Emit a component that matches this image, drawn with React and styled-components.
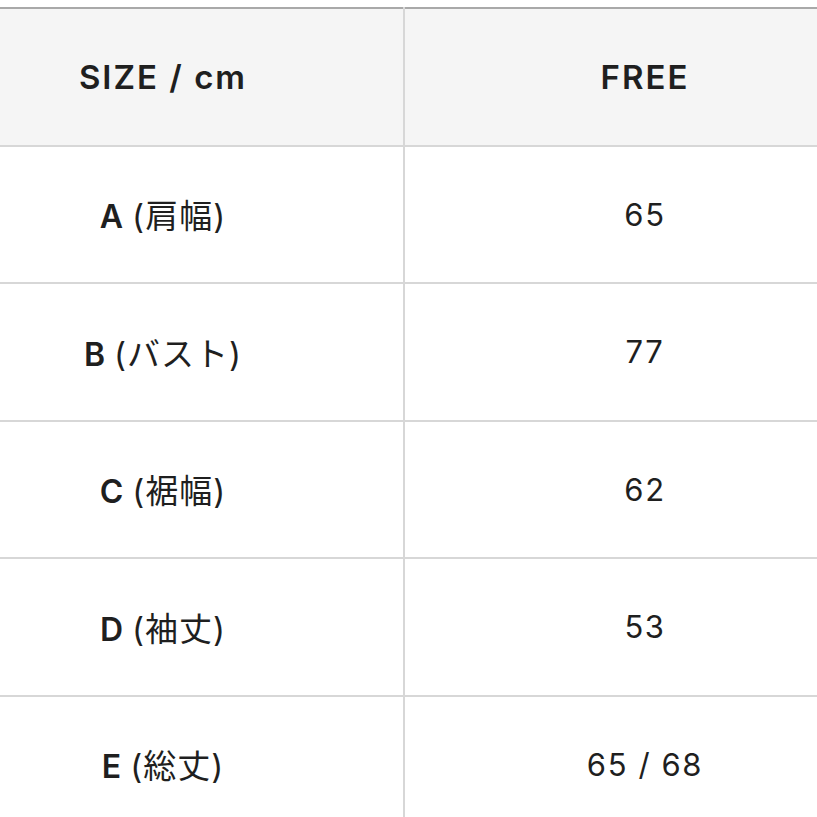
import React from "react";
import styled, { createGlobalStyle } from "styled-components";

const Global = createGlobalStyle`
  html, body { margin: 0; padding: 0; background: #ffffff; }
  body { font-family: "Inter", "Noto Sans CJK JP", sans-serif; color: #222222; }
`;

const Page = styled.div`
  width: 817px;
  height: 817px;
  overflow: hidden;
  padding-top: 7px;
  box-sizing: border-box;
  background: #ffffff;
`;

const Table = styled.table`
  width: 962px;
  margin-left: -77px;
  border-collapse: collapse;
  border-top: 2px solid #a9a9a9;
  table-layout: fixed;
`;

const HeadRow = styled.tr`
  background: #f5f5f5;
`;

const Cell = styled.td`
  height: 135.5px;
  padding: 0;
  text-align: center;
  vertical-align: middle;
  border-bottom: 2px solid #d7d7d7;
  border-right: ${(p) => (p.$first ? "2px solid #d7d7d7" : "none")};
  font-size: ${(p) => (p.$head ? "33px" : "31px")};
  font-weight: ${(p) => (p.$head ? 600 : 400)};
  letter-spacing: ${(p) => (p.$head ? "2px" : "1.6px")};
  color: #1f1f1f;
  white-space: nowrap;
`;

const Key = styled.span`
  font-weight: 600;
  font-size: 32px;
  margin-right: 9px;
  letter-spacing: 0;
`;

const Paren = styled.span`
  font-weight: 400;
  font-size: 33px;
  letter-spacing: 1px;
`;

const rows = [
  ["A", "(肩幅)", "65"],
  ["B", "(バスト)", "77"],
  ["C", "(裾幅)", "62"],
  ["D", "(袖丈)", "53"],
  ["E", "(総丈)", "65 / 68"],
];

export default function App() {
  return (
    <>
      <Global />
      <Page>
        <Table>
          <tbody>
            <HeadRow>
              <Cell $first $head>SIZE / cm</Cell>
              <Cell $head>FREE</Cell>
            </HeadRow>
            {rows.map(([k, label, v]) => (
              <tr key={k}>
                <Cell $first>
                  <Key>{k}</Key>
                  <Paren>{label}</Paren>
                </Cell>
                <Cell>{v}</Cell>
              </tr>
            ))}
          </tbody>
        </Table>
      </Page>
    </>
  );
}
